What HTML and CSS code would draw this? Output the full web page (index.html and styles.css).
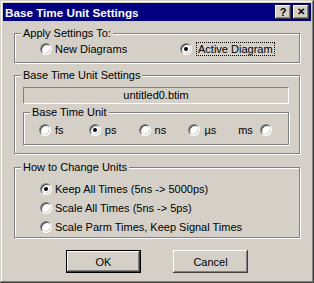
FILE: index.html
```html
<!DOCTYPE html>
<html>
<head>
    <link rel="stylesheet" href="styles.css">
</head>
<body>
    <div class="window">
        <div class="titlebar">
            <span class="title">Base Time Unit Settings</span>
            <span class="tbtn">?</span>
            <span class="tbtn close">✕</span>
        </div>

        <div class="dialog">
            <fieldset class="group apply">
                <legend>Apply Settings To:</legend>
                <div class="row">
                    <label class="opt wide"><span class="radio"></span>New Diagrams</label>
                    <label class="opt"><span class="radio on"></span><span class="focus">Active Diagram</span></label>
                </div>
            </fieldset>

            <fieldset class="group base">
                <legend>Base Time Unit Settings</legend>
                <div class="inner">
                    <div class="filebox">untitled0.btim</div>
                    <fieldset class="group units">
                        <legend>Base Time Unit</legend>
                        <div class="row">
                            <label class="opt unit"><span class="radio"></span>fs</label>
                            <label class="opt unit"><span class="radio on"></span>ps</label>
                            <label class="opt unit"><span class="radio"></span>ns</label>
                            <label class="opt unit"><span class="radio"></span>µs</label>
                            <label class="opt unit rev">ms<span class="radio"></span></label>
                        </div>
                    </fieldset>
                </div>
            </fieldset>

            <fieldset class="group change">
                <legend>How to Change Units</legend>
                <div class="list">
                    <label class="opt line"><span class="radio on"></span>Keep All Times (5ns -&gt; 5000ps)</label>
                    <label class="opt line"><span class="radio"></span>Scale All Times (5ns -&gt; 5ps)</label>
                    <label class="opt line"><span class="radio"></span>Scale Parm Times, Keep Signal Times</label>
                </div>
            </fieldset>

            <div class="buttons">
                <button class="btn default">OK</button>
                <button class="btn">Cancel</button>
            </div>
        </div>
    </div>
</body>
</html>
```
FILE: styles.css
```css
body {
    margin: 0;
    font-family: "Liberation Sans", Arial, sans-serif;
    font-size: 11px;
    color: #000;
    background: #d4d0c8;
}

.window {
    width: 314px;
    height: 283px;
    box-sizing: border-box;
    padding: 3px;
    background: #d4d0c8;
    box-shadow: inset -1px -1px #404040, inset 1px 1px #d4d0c8,
                inset -2px -2px #808080, inset 2px 2px #fff;
}

.titlebar {
    height: 18px;
    background: #000080;
    display: flex;
    align-items: center;
    padding: 0 2px;
}
.title {
    flex: 1;
    color: #fff;
    font-weight: bold;
    font-size: 11.7px;
}
.tbtn {
    width: 16px;
    height: 14px;
    box-sizing: border-box;
    margin-left: 2px;
    background: #d4d0c8;
    box-shadow: inset -1px -1px #404040, inset 1px 1px #fff, inset -2px -2px #808080;
    font-weight: bold;
    font-size: 11px;
    line-height: 14px;
    text-align: center;
}
.tbtn.close {
    font-size: 10px;
}

.dialog {
    padding: 6px 11px 0;
}

.group {
    margin: 0;
    padding: 0;
    border: 1px solid #808080;
    box-shadow: inset 1px 1px #fff, 1px 1px #fff;
    min-width: 0;
}
.group legend {
    margin-left: 6px;
    padding: 0 2px;
    line-height: 13px;
    background: #d4d0c8;
}

.row {
    display: flex;
    align-items: center;
    height: 18px;
}

.opt {
    display: flex;
    align-items: center;
    gap: 3px;
    white-space: nowrap;
}

.radio {
    width: 12px;
    height: 12px;
    box-sizing: border-box;
    border-radius: 50%;
    background: #fff;
    border: 1px solid;
    border-color: #808080 #fff #fff #808080;
    box-shadow: inset 1px 1px #404040, inset -1px -1px #d4d0c8;
    display: flex;
    align-items: center;
    justify-content: center;
    flex: none;
}
.radio.on::after {
    content: "";
    width: 4px;
    height: 4px;
    border-radius: 50%;
    background: #000;
}

.apply .row {
    padding: 0 0 4px 25px;
}
.apply .wide {
    width: 140px;
}
.apply .opt:last-child {
    gap: 4px;
}
.focus {
    border: 1px dotted #000;
    padding: 0 1px;
    line-height: 12px;
}

.base {
    margin-top: 6px;
}
.base .inner {
    padding: 0 10px 8px 8px;
}
.filebox {
    margin-top: 5px;
    height: 17px;
    line-height: 15px;
    box-sizing: border-box;
    border: 1px solid;
    border-color: #808080 #fff #fff #808080;
    text-align: center;
}

.units {
    margin-top: 2px;
}
.units .row {
    padding: 2px 0 5px 15px;
}
.units .unit {
    width: 51px;
    gap: 4px;
}
.units .rev {
    gap: 7px;
}

.change {
    margin-top: 7px;
}
.change .list {
    padding: 5px 0 1px 25px;
}
.change .line {
    height: 19px;
}

.buttons {
    display: flex;
    justify-content: center;
    gap: 32px;
    margin-top: 12px;
}
.btn {
    width: 75px;
    height: 23px;
    padding: 0;
    border: none;
    background: #d4d0c8;
    font: inherit;
    color: #000;
    box-shadow: inset -1px -1px #404040, inset 1px 1px #fff, inset -2px -2px #808080;
}
.btn.default {
    border: 1px solid #000;
}
```
